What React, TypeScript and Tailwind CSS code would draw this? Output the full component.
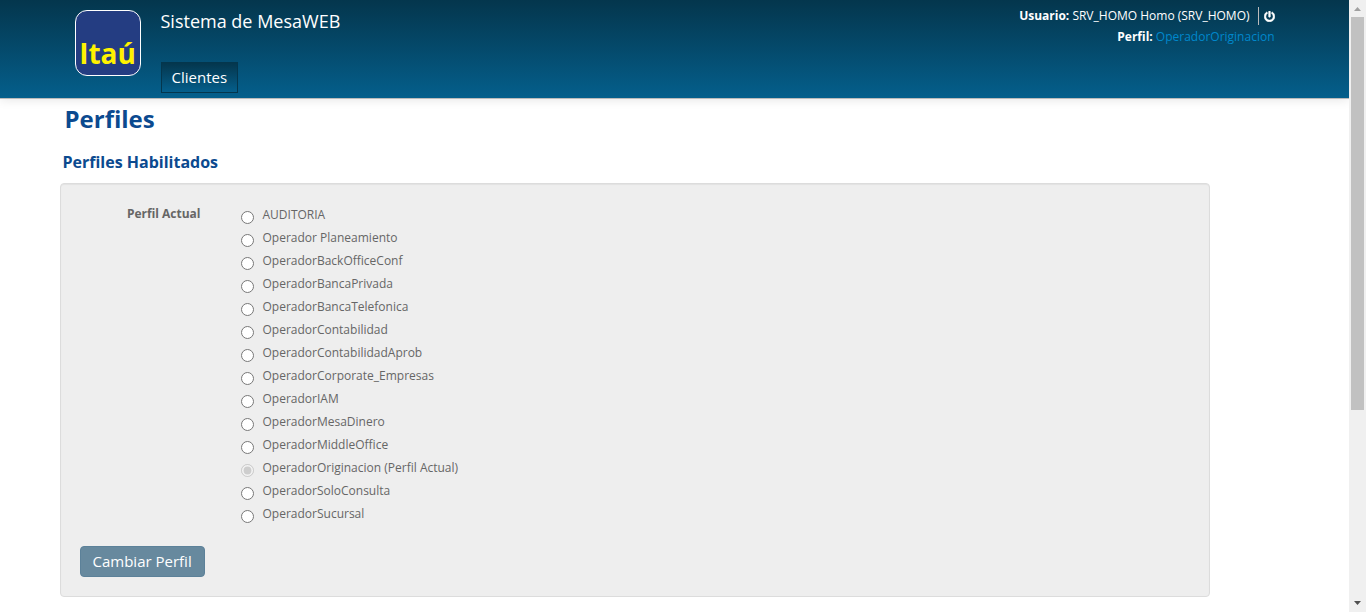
import { useState } from "react";
import { FaPowerOff } from "react-icons/fa";

const profiles = [
  "AUDITORIA",
  "Operador Planeamiento",
  "OperadorBackOfficeConf",
  "OperadorBancaPrivada",
  "OperadorBancaTelefonica",
  "OperadorContabilidad",
  "OperadorContabilidadAprob",
  "OperadorCorporate_Empresas",
  "OperadorIAM",
  "OperadorMesaDinero",
  "OperadorMiddleOffice",
  "OperadorOriginacion",
  "OperadorSoloConsulta",
  "OperadorSucursal",
];
const current = "OperadorOriginacion";

function Logo() {
  return (
    <a
      href="#"
      className="flex h-[66px] w-[66px] items-end justify-center rounded-xl border border-white bg-[#243d82] pb-2 text-[28px] leading-7 font-bold text-[#fff200]"
    >
      Itaú
    </a>
  );
}

function Header() {
  return (
    <header className="relative border-b border-[#bbbbbb] bg-linear-to-b from-[#04364d] to-[#045f8c] text-white shadow-[0_1px_10px_rgba(0,0,0,0.1)]">
      <div className="mx-auto flex max-w-[1200px] items-start pt-2.5 pb-[5px]">
        <Logo />
        <div className="ml-5 flex flex-col items-start gap-[30px]">
          <div className="text-[18px] leading-[22px]">Sistema de MesaWEB</div>
          <nav>
            <a
              href="#"
              className="block border border-[#04364d] bg-linear-to-b from-[#04364d] to-[#045f8c] px-2.5 py-1 text-[15px] leading-[21px]"
            >
              Clientes
            </a>
          </nav>
        </div>
        <div className="-mt-1 ml-auto flex flex-col items-end gap-px text-[12px] leading-5">
          <div className="flex items-center">
            <span>
              <b>Usuario:</b> SRV_HOMO Homo (SRV_HOMO)
            </span>
            <button
              type="button"
              aria-label="Salir"
              className="ml-2 flex h-[18px] items-center border-l border-[#bbbbbb] pl-[5px]"
            >
              <FaPowerOff size={11} stroke="currentColor" strokeWidth={24} />
            </button>
          </div>
          <div>
            <b>Perfil:</b>{" "}
            <a href="#" className="text-[#0088cc]">
              {current}
            </a>
          </div>
        </div>
      </div>
    </header>
  );
}

function ProfileForm() {
  const [selected, setSelected] = useState(current);
  return (
    <form
      onSubmit={(e) => e.preventDefault()}
      className="rounded-[4px] border border-[#dcdcdc] bg-[#eeeeee] px-[19px] pt-5 pb-[19px] shadow-[inset_0_1px_1px_rgba(0,0,0,0.05)]"
    >
      <div role="radiogroup" aria-labelledby="perfil-actual" className="flex gap-10 text-[12px] text-[#666666]">
        <div id="perfil-actual" className="w-[121px] text-right leading-5 font-bold">
          Perfil Actual
        </div>
        <div className="flex flex-col">
          {profiles.map((name) => (
            <label key={name} className="flex h-[23px] items-start gap-[9px] leading-[22px]">
              <input
                type="radio"
                name="perfil"
                value={name}
                checked={selected === name}
                disabled={name === current}
                onChange={() => setSelected(name)}
                className="mt-[7px] h-[13px] w-[13px]"
              />
              {name === current ? `${name} (Perfil Actual)` : name}
            </label>
          ))}
        </div>
      </div>
      <button
        type="submit"
        className="mt-5 block rounded-[4px] border border-[#5c8199] bg-[#67899e] px-3 py-1 text-[15px] leading-[21px] text-white"
      >
        Cambiar Perfil
      </button>
    </form>
  );
}

function ScrollTrack() {
  return (
    <div aria-hidden="true" className="sticky top-0 flex h-screen w-[17px] shrink-0 flex-col items-center bg-[#f0f0f0]">
      <svg width="17" height="17" viewBox="0 0 17 17" fill="#a0a0a0" className="shrink-0">
        <path d="M5 11h7L8.5 7z" />
      </svg>
      <div className="w-[13px] flex-[393] bg-[#c1c1c1]" />
      <div className="flex-[185]" />
      <svg width="17" height="17" viewBox="0 0 17 17" fill="#505050" className="shrink-0">
        <path d="M5 6h7L8.5 10z" />
      </svg>
    </div>
  );
}

export default function App() {
  return (
    <div className="flex items-start bg-white font-['Open_Sans',sans-serif]">
      <div className="min-w-0 flex-1">
        <Header />
        <div className="mx-auto max-w-[1200px]">
          <main className="-ml-[15px] max-w-[1150px] pb-[15px]">
            <h1 className="px-[5px] pt-1 pb-1.5 text-[24px] leading-8 font-bold text-[#0b4a8f]">Perfiles</h1>
            <h2 className="px-[3px] py-[9px] text-[16px] leading-6 font-bold text-[#0b4a8f]">Perfiles Habilitados</h2>
            <ProfileForm />
          </main>
        </div>
      </div>
      <ScrollTrack />
    </div>
  );
}
